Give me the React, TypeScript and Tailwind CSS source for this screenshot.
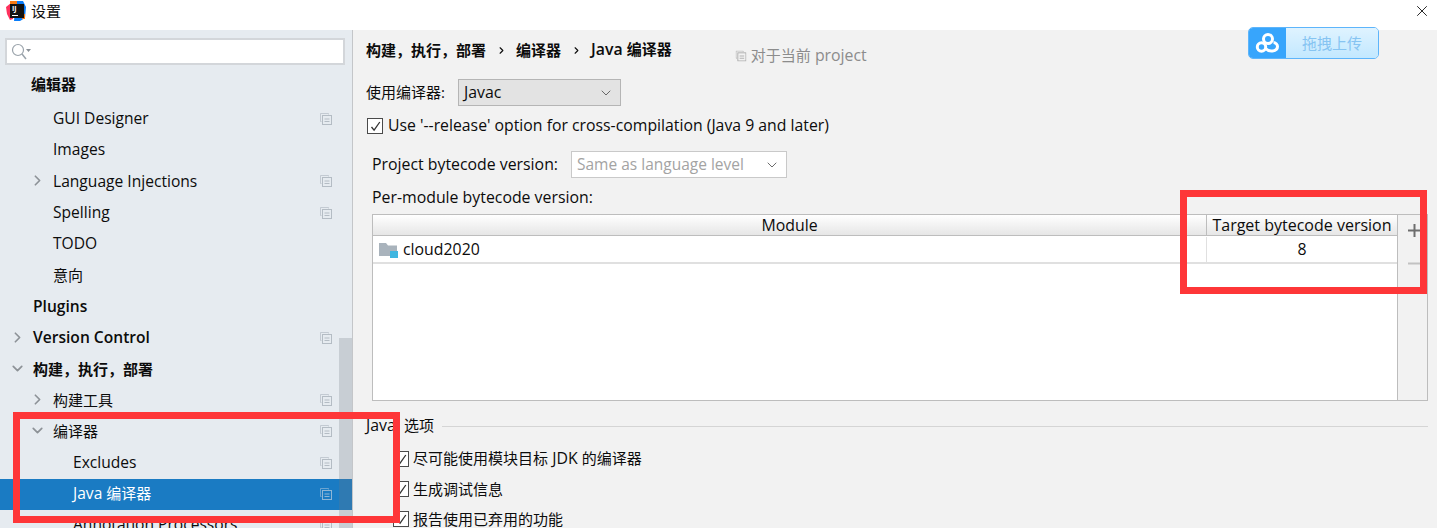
import { ChevronDown, ChevronRight, X } from "lucide-react";

const font = "font-['Open_Sans','Noto_Sans_CJK_SC',sans-serif]";

interface TreeRow {
  label: string;
  indent: number;
  bold?: boolean;
  arrow?: "right" | "down";
  copy?: boolean;
  selected?: boolean;
}

const rows: TreeRow[] = [
  { label: "编辑器", indent: 31, bold: true },
  { label: "GUI Designer", indent: 53, copy: true },
  { label: "Images", indent: 53 },
  { label: "Language Injections", indent: 53, arrow: "right", copy: true },
  { label: "Spelling", indent: 53, copy: true },
  { label: "TODO", indent: 53 },
  { label: "意向", indent: 53 },
  { label: "Plugins", indent: 33, bold: true },
  { label: "Version Control", indent: 33, bold: true, arrow: "right", copy: true },
  { label: "构建，执行，部署", indent: 33, bold: true, arrow: "down" },
  { label: "构建工具", indent: 53, arrow: "right", copy: true },
  { label: "编译器", indent: 53, arrow: "down", copy: true },
  { label: "Excludes", indent: 73, copy: true },
  { label: "Java 编译器", indent: 73, copy: true, selected: true },
  { label: "Annotation Processors", indent: 73, copy: true },
];

function Txt({ children, side }: { children: string; side?: boolean }) {
  const parts = children.split(/([\x00-\x7f]+)/).filter(Boolean);
  return (
    <>
      {parts.map((p, i) =>
        /^[\x00-\x7f]+$/.test(p) ? (
          <span key={i} className={side ? "text-[15.6px]" : "text-[15.85px]"}>
            {p}
          </span>
        ) : (
          <span key={i} className="text-[15px]">
            {p}
          </span>
        ),
      )}
    </>
  );
}

function CopyIcon({ className }: { className?: string }) {
  return (
    <svg width="12" height="12" viewBox="0 0 12 12" fill="none" className={className}>
      <path d="M8.5 1.5V0.5H0.5V8.5H1.5" stroke="currentColor" opacity="0.7" />
      <rect x="2.5" y="2.5" width="9" height="9" stroke="currentColor" />
      <path d="M4.5 6h5M4.5 8.5h5" stroke="currentColor" />
    </svg>
  );
}

function Check() {
  return (
    <span className="flex h-4 w-4 shrink-0 items-center justify-center border border-[#4a4a4a] bg-white">
      <svg width="13" height="13" viewBox="0 0 13 13" fill="none">
        <path d="M2.5 7l2.6 3.2L10.8 2" stroke="#333" strokeWidth="1.3" />
      </svg>
    </span>
  );
}

function Row({ row }: { row: TreeRow }) {
  const Arrow = row.arrow === "down" ? ChevronDown : ChevronRight;
  return (
    <div
      className={`relative flex h-[31.25px] shrink-0 items-center pb-[1px] text-[15px] ${row.selected ? "bg-[#1a7bc3] text-white" : "text-[#0c0c0c]"} ${row.bold ? "font-semibold" : ""}`}
      style={{ paddingLeft: row.indent }}
    >
      {row.arrow && (
        <Arrow
          size={17}
          strokeWidth={2.4}
          className="absolute top-[6px] text-[#8d9297]"
          style={{ left: row.indent - 24 }}
        />
      )}
      <span className="whitespace-nowrap">
        <Txt side>{row.label}</Txt>
      </span>
      {row.copy && (
        <CopyIcon className={`absolute left-[320px] top-[9px] ${row.selected ? "text-[#8fb6d6]" : "text-[#b4bcc4]"}`} />
      )}
    </div>
  );
}

function Sidebar() {
  return (
    <aside className="relative flex h-full w-[353px] shrink-0 flex-col overflow-hidden border-r border-[#c4c6c9] bg-[#e6ebf0] pt-[8px]">
      <div className="mx-[5px] flex h-[27px] w-[340px] shrink-0 items-center border-2 border-[#d3d6da] bg-white pl-[4px]">
        <svg width="22" height="18" viewBox="0 0 22 18" fill="none">
          <circle cx="7" cy="7" r="5.5" stroke="#9aa3ab" strokeWidth="1.2" />
          <path d="M11 11l4 5" stroke="#9aa3ab" strokeWidth="1.5" />
          <path d="M15 6h5l-2.5 3z" fill="#8a9198" />
        </svg>
      </div>
      <div className="mt-[4px] flex flex-col [&>div:first-child]:mb-[3.5px]">
        {rows.map((r) => (
          <Row key={r.label} row={r} />
        ))}
      </div>
      {/* scrollbar */}
      <div className="absolute left-[339px] top-[308px] h-[190px] w-[13px] bg-[#6f7880]/25" />
    </aside>
  );
}

function Main() {
  return (
    <main className="flex h-full min-w-0 flex-1 flex-col overflow-hidden bg-[#f2f2f2] pl-[13px] pr-[9px] text-[15px] text-[#0c0c0c]">
      <div className="mt-[10px] flex h-[20px] items-center whitespace-nowrap font-semibold">
        <span>构建，执行，部署</span>
        <ChevronRight size={11} strokeWidth={2.4} className="mx-[9.5px]" />
        <span>编译器</span>
        <ChevronRight size={11} strokeWidth={2.4} className="mx-[9.5px]" />
        <span>
          <Txt>Java 编译器</Txt>
        </span>
        <span className="ml-[63px] mt-[12px] flex items-center gap-[4px] font-normal text-[#8c8c8c]">
          <CopyIcon className="scale-90 text-[#aaa]" />
          <span>
            <Txt>对于当前 project</Txt>
          </span>
        </span>
      </div>

      <div className="mt-[19px] flex h-[27px] items-center">
        <span className="w-[92px]">使用编译器:</span>
        <div className="flex h-[27px] w-[163px] items-center justify-between border border-[#b5b5b5] bg-[#e3e3e3] pl-[5px] pr-[6px]">
          <span className="pt-[1px] text-[15.85px]">Javac</span>
          <ChevronDown size={16} className="text-[#555]" strokeWidth={1.3} />
        </div>
      </div>

      <div className="mt-[12px] flex h-[16px] items-center gap-[5px] pl-[1px]">
        <Check />
        <span className="whitespace-nowrap text-[15.8px]">Use '--release' option for cross-compilation (Java 9 and later)</span>
      </div>

      <div className="mt-[17px] flex h-[27px] items-center pl-[6px]">
        <span className="w-[199px] whitespace-nowrap text-[15.85px]">Project bytecode version:</span>
        <div className="flex h-[27px] w-[216px] items-center justify-between border border-[#c9c9c9] bg-white pl-[5px] pr-[6px] text-[15.5px] text-[#a3a3a3]">
          Same as language level
          <ChevronDown size={16} className="text-[#555]" strokeWidth={1.3} />
        </div>
      </div>

      <div className="mt-[9px] h-[20px] pl-[6px] text-[15.85px] leading-[20px]">Per-module bytecode version:</div>

      <div className="ml-[6px] mt-[7px] flex h-[187px] border border-[#bdbdbd]">
        <div className="flex flex-1 flex-col bg-white">
          <div className="flex h-[21px] shrink-0 border-b border-[#bdbdbd] bg-gradient-to-b from-white to-[#e6e6e6]">
            <div className="flex-1 border-r border-[#bdbdbd] text-center text-[15.85px] leading-[21px]">Module</div>
            <div className="w-[190px] whitespace-nowrap text-center text-[16px] leading-[21px]">Target bytecode version</div>
          </div>
          <div className="flex h-[28px] shrink-0 border-b-2 border-[#e0e0e0] pt-[1px] text-[15.85px]">
            <div className="flex flex-1 items-center gap-[5px] border-r border-[#e0e0e0] pl-[6px]">
              <svg width="19" height="16" viewBox="0 0 19 16">
                <path d="M0 1h7l2 2.5h9V14H0z" fill="#a9b3bc" />
                <rect x="11" y="9" width="8" height="7" fill="#40b6e0" />
              </svg>
              cloud2020
            </div>
            <div className="flex w-[190px] items-center justify-center">8</div>
          </div>
        </div>
        <div className="flex w-[30px] shrink-0 flex-col items-center border-l border-[#bdbdbd] bg-[#f2f2f2] pl-[3px] pt-[9px]">
          <svg width="13" height="13" viewBox="0 0 13 13">
            <path d="M6.5 0v13M0 6.5h13" stroke="#6e6e6e" strokeWidth="2" />
          </svg>
          <svg width="13" height="3" viewBox="0 0 13 3" className="mt-[25px]">
            <path d="M0 1.5h13" stroke="#c2c2c2" strokeWidth="2" />
          </svg>
        </div>
      </div>

      <div className="mt-[15px] flex h-[20px] items-center">
        <span className="whitespace-nowrap">
          <Txt>Java: 选项</Txt>
        </span>
        <div className="ml-[8px] h-px flex-1 bg-[#d5d5d5]" />
      </div>

      <div className="mt-[15px] flex flex-col gap-[14px] pl-[27px]">
        {["尽可能使用模块目标 JDK 的编译器", "生成调试信息", "报告使用已弃用的功能"].map((t) => (
          <div key={t} className="flex h-[16px] shrink-0 items-center gap-[4px]">
            <Check />
            <span className="whitespace-nowrap">
              <Txt>{t}</Txt>
            </span>
          </div>
        ))}
      </div>
    </main>
  );
}

export default function App() {
  return (
    <div className={`relative flex h-[528px] w-[1437px] flex-col overflow-hidden bg-white ${font}`}>
      <header className="flex h-[30px] shrink-0 items-start bg-white pl-[6px] pt-[1px]">
        <svg width="20" height="20" viewBox="0 0 20 20">
          <path d="M0 6l5-4 3 3-1 13-3 1-3-6z" fill="#fe315d" />
          <path d="M10 0h7l3 6-1 11-5 3H8z" fill="#087cfa" />
          <path d="M4 0h7v4H4zM16 13h3v5h-3z" fill="#f97a12" />
          <rect x="4" y="3" width="14" height="14" fill="#111" />
          <text x="6" y="10" fontSize="7" fontWeight="700" fill="#fff" fontFamily="Open Sans, sans-serif">IJ</text>
          <rect x="6" y="14" width="6" height="1" fill="#fff" />
        </svg>
        <span className="ml-[5px] text-[15px] leading-[20px] text-[#111]">设置</span>
        <X size={18} strokeWidth={1.2} className="ml-auto mr-[6px] mt-[1px] text-[#111]" />
      </header>
      <div className="flex min-h-0 flex-1">
        <Sidebar />
        <Main />
      </div>

      {/* upload widget floating over the window */}
      <div className="absolute left-[1248px] top-[27px] flex h-[32px] w-[131px] overflow-hidden rounded-[5px] border border-[#5db5fb]">
        <div className="flex w-[37px] items-center justify-center bg-[#37a5fc]">
          <svg width="26" height="20" viewBox="0 0 26 20" fill="none" stroke="#fff" strokeWidth="3">
            <circle cx="13" cy="6" r="4.5" />
            <circle cx="6.5" cy="14" r="4.2" />
            <path d="M10.5 15.5c2 2 3.500 3 7 2.500 3.500-.5 5-2.500 5-4.500s-2-4-4-4" />
          </svg>
        </div>
        <div className="flex flex-1 items-center justify-center bg-gradient-to-b from-[#dff3ff] to-[#c2e8ff] text-[15px] text-[#86c4f2]">
          拖拽上传
        </div>
      </div>

      {/* red annotation boxes */}
      <div className="absolute left-[13px] top-[412px] h-[111px] w-[387px] border-[7px] border-[#fe3638]" />
      <div className="absolute left-[1180px] top-[190px] h-[104px] w-[247px] border-[7px] border-[#fe3638]" />
    </div>
  );
}
